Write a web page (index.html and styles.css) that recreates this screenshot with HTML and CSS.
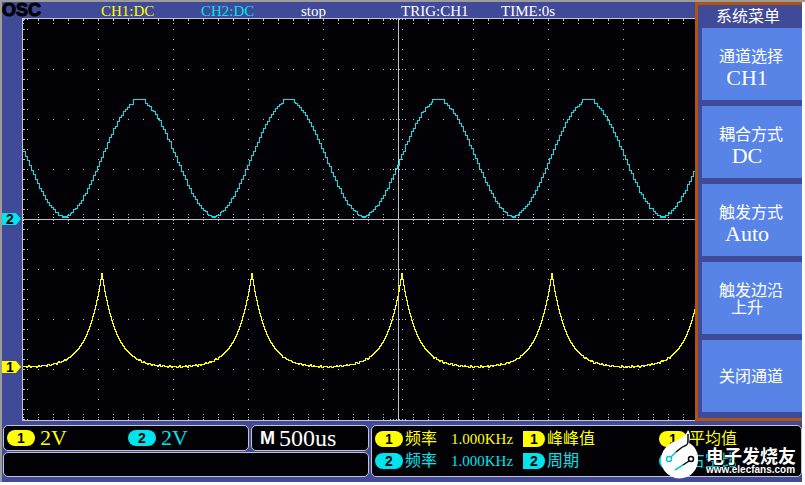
FILE: index.html
```html
<!DOCTYPE html>
<html lang="zh-CN">
<head>
    <meta charset="UTF-8">
    <meta name="viewport" content="width=device-width, initial-scale=1.0">
    <title>OSC</title>
    <link rel="stylesheet" href="styles.css">
</head>
<body>
    <div class="screen">
        <main class="top">
            <section class="scope">
                <header class="status">
                    <h1 class="logo">OSC</h1>
                    <span class="ch1">CH1:DC</span>
                    <span class="ch2">CH2:DC</span>
                    <span>stop</span>
                    <span>TRIG:CH1</span>
                    <span>TIME:0s</span>
                </header>
                <div class="plot-row">
                    <div class="rail">
                        <div class="marker marker-2">2</div>
                        <div class="marker marker-1">1</div>
                    </div>
                    <svg class="plot" id="plot">
                        <path id="grid" class="grid"></path>
                        <path id="wave1" class="wave wave-1"></path>
                        <path id="wave2" class="wave wave-2"></path>
                    </svg>
                </div>
            </section>

            <nav class="menu">
                <h2 class="menu-title">系统菜单</h2>
                <button class="item" type="button">
                    <span class="label">通道选择</span>
                    <span class="value">CH1</span>
                </button>
                <button class="item" type="button">
                    <span class="label">耦合方式</span>
                    <span class="value">DC</span>
                </button>
                <button class="item" type="button">
                    <span class="label">触发方式</span>
                    <span class="value">Auto</span>
                </button>
                <button class="item" type="button">
                    <span class="label">触发边沿</span>
                    <span class="value value-small">上升</span>
                </button>
                <button class="item item-single" type="button">
                    <span class="label">关闭通道</span>
                </button>
            </nav>
        </main>

        <footer class="readouts">
            <div class="settings">
                <div class="settings-row">
                    <div class="box scales">
                        <div class="scale ch1"><span class="pill">1</span>2V</div>
                        <div class="scale ch2"><span class="pill">2</span>2V</div>
                    </div>
                    <div class="box timebase"><b>M</b><span>500us</span></div>
                </div>
                <div class="box message"></div>
            </div>
            <div class="box measures">
                <div class="measure ch1"><span class="pill">1</span>频率<span class="number">1.000KHz</span></div>
                <div class="measure ch1"><span class="pill pill-half">1</span>峰峰值</div>
                <div class="measure ch1"><span class="pill">1</span>平均值</div>
                <div class="measure ch2"><span class="pill">2</span>频率<span class="number">1.000KHz</span></div>
                <div class="measure ch2"><span class="pill pill-half">2</span>周期</div>
                <div class="measure ch2"><span class="pill">2</span>占空比</div>
                <div class="brand">
                    <svg class="brand-mark" width="40" height="49" viewBox="0 0 40 49">
                        <path fill="#fff" d="M28 0C31 4 30 9 29 13C35 16 38 22 38 29A18.500 18.500 0 1 1 10 14C15 10 25 9 28 0Z"/>
                        <path fill="none" stroke="#05070c" stroke-width="1.500" d="M16 22L21 18C24 15 28 17 28 11V4"/>
                        <path fill="none" stroke="#0cc5d2" stroke-width="1.500" d="M11 27L16 22M15 40L23 35"/>
                        <path fill="none" stroke="#05070c" stroke-width="1.500" d="M23 35L29 31"/>
                        <circle cx="9" cy="29" r="2.500" fill="#fff" stroke="#0cc5d2" stroke-width="1.500"/>
                        <circle cx="31" cy="29" r="2.500" fill="#fff" stroke="#05070c" stroke-width="1.500"/>
                    </svg>
                    <div class="brand-text">
                        <span class="brand-name">电子发烧友</span>
                        <span class="brand-url">www.elecfans.com</span>
                    </div>
                </div>
            </div>
        </footer>
    </div>

    <script src="scope.js"></script>
</body>
</html>
```

FILE: styles.css
```css
body {
    margin: 0;
    padding-right: 3px;
    background: linear-gradient(#9c9c9c, #9c9c9c) 0 0 / 100% 2px no-repeat #fff;
    font-family: "Liberation Serif", "Noto Sans CJK SC", serif;
    color: #fff;
}

h1, h2 {
    margin: 0;
    font-weight: normal;
}

.ch1 { color: #ffff00; }
.ch2 { color: #00e4ec; }

.screen {
    background-color: #404a98;
    background-clip: padding-box;
    border-left: 2px solid #9c9c9c;
    border-top: 2px solid #9c9c9c;
}

.top {
    display: flex;
}

.scope {
    flex: 1;
    min-width: 0;
}

/* status line */
.status {
    display: grid;
    grid-template-columns: 99px repeat(5, 100px);
    height: 16px;
    font-size: 15px;
    line-height: 19px;
    white-space: nowrap;
}

.logo {
    font: bold 18px/17px "Liberation Sans", sans-serif;
    color: #020206;
    -webkit-text-stroke: 1px #020206;
}

/* plot */
.plot-row {
    display: flex;
}

.rail {
    position: relative;
    width: 20px;
}

.marker {
    position: absolute;
    left: 0;
    width: 19px;
    height: 12px;
    box-sizing: border-box;
    padding-left: 4px;
    font: bold 14px/13px "Liberation Sans", sans-serif;
    color: #020206;
    clip-path: polygon(0 0, 14px 0, 100% 50%, 14px 100%, 0 100%);
}

.marker-2 {
    top: 195px;
    background: #00e4ec;
}

.marker-1 {
    top: 343px;
    background: #ffff00;
}

.plot {
    display: block;
    flex: 1;
    min-width: 0;
    height: 401px;
    background: #020206;
    border: 1px solid #c4c4cc;
    border-right: 0;
}

.grid {
    fill: #c4c4cc;
    shape-rendering: crispEdges;
}

.wave {
    fill: none;
    shape-rendering: crispEdges;
}

.wave-1 { stroke: #ffff00; }
.wave-2 { stroke: #00e4ec; }

/* menu */
.menu {
    display: flex;
    flex-direction: column;
    gap: 6px;
    width: 100px;
    padding: 0 0 6px 4px;
    border: 3px solid #b4540c;
    border-right: 0;
}

.menu-title {
    margin-bottom: -6px;
    padding-right: 8px;
    font-size: 16px;
    line-height: 24px;
    height: 23px;
    text-align: center;
}

.item {
    display: flex;
    flex-direction: column;
    align-items: center;
    height: 72px;
    padding: 20px 2px 0 0;
    border: 0;
    background: #5884e8;
    color: #fff;
    font-family: inherit;
}

.item-single {
    justify-content: center;
    padding-top: 2px;
}

.label {
    font-size: 16px;
    line-height: 18px;
}

.value {
    padding-right: 8px;
    font-size: 22px;
    line-height: 24px;
}

.value-small {
    font-size: 16px;
    line-height: 15px;
}

/* bottom readouts */
.readouts {
    display: flex;
    gap: 2px;
    padding: 4px 0 5px 1px;
}

.settings {
    display: flex;
    flex-direction: column;
    gap: 1px;
    width: 366px;
}

.settings-row {
    display: flex;
    gap: 2px;
}

.box {
    box-sizing: border-box;
    background: #020206;
    border: 1px solid #c4c4cc;
    border-radius: 5px;
}

.scales {
    display: grid;
    grid-template-columns: 121px 1fr;
    flex: 1;
    height: 26px;
    padding-left: 3px;
}

.scale {
    display: flex;
    align-items: center;
    gap: 5px;
    font-size: 22px;
    line-height: 24px;
}

.timebase {
    display: flex;
    align-items: center;
    gap: 4px;
    width: 118px;
    padding-left: 8px;
    font-size: 24px;
    line-height: 24px;
}

.timebase b {
    font: bold 18px/24px "Liberation Sans", sans-serif;
}

.message {
    height: 25px;
}

.pill {
    width: 28px;
    height: 16px;
    border-radius: 8px;
    background: currentColor;
    font: bold 14px/16px "Liberation Sans", sans-serif;
    text-align: center;
}

.pill::first-letter {
    color: #020206;
}

.pill-half {
    width: 22px;
    border-radius: 0 8px 8px 0;
}

.measures {
    position: relative;
    flex: 1;
    display: grid;
    grid-template-columns: 148px 136px 1fr;
    grid-auto-rows: 22px;
    padding: 2px 0 0 3px;
}

.measure {
    display: flex;
    align-items: center;
    gap: 2px;
    font-size: 16px;
    line-height: 22px;
    white-space: nowrap;
}

.number {
    margin-left: 12px;
    font-size: 15px;
}

.brand {
    position: absolute;
    right: 5px;
    bottom: -3px;
    display: flex;
    align-items: flex-end;
    gap: 6px;
}

.brand-text {
    display: flex;
    flex-direction: column;
    padding-bottom: 4px;
    font-weight: bold;
    text-shadow: 0 0 2px #020206, 1px 1px 1px #020206;
}

.brand-name {
    font: bold 18px/19px "Noto Sans CJK SC", sans-serif;
}

.brand-url {
    font: bold 10px/10px "Liberation Sans", sans-serif;
}
```

FILE: scope.js
```js
const plot = document.getElementById('plot');
const width = plot.clientWidth;
const height = 401;
const centerX = 375;
const centerY = 200;

function dot(x, y) {
    return `M${x} ${y}h1v1h-1z`;
}

// Graticule: 75 x 50 px divisions, a dot every 15 px across and 10 px down
function drawGrid() {
    let d = `M0 ${centerY}h${width}v1h-${width}zM${centerX} 0h1v${height}h-1z`;

    for (let x = 0; x < width; x += 15) {
        for (let y = 50; y < height; y += 50) {
            d += dot(x, y);
        }
        for (const y of [0, 1, 4, 195, 198, 201, 204, 395, 398, 400]) {
            d += dot(x, y);
        }
    }

    for (let y = 0; y < height; y += 10) {
        for (let x = 75; x < width; x += 75) {
            d += dot(x, y);
        }
        for (const x of [0, 1, 4, 370, 379]) {
            d += dot(x, y);
        }
        if (y % 50 === 0) {
            d += dot(367, y) + dot(373, y) + dot(376, y) + dot(382, y);
        }
    }
    document.getElementById('grid').setAttribute('d', d);
}

// One sample per pixel, joined by vertical steps
function drawWave(id, sample) {
    let d = '';
    for (let x = 0; x < width; x++) {
        const y = Math.round(sample(x)) + 0.5;
        d += (x === 0 ? `M0 ${y}` : `V${y}`) + 'h1';
    }
    document.getElementById(id).setAttribute('d', d);
}

function noise(x) {
    return Math.sin(x * 12.9) * Math.sin(x * 4.7);
}

// CH1: sharp peaks that decay to the base line
drawWave('wave1', (x) => {
    const phase = (x - 78 + 1500) % 150;
    const distance = Math.min(phase, 150 - phase);
    const y = 348 - 94 * Math.exp(-distance / 14.5);
    return distance > 30 ? y + noise(x) : y;
});

// CH2: sine, sampled coarsely so the trace climbs in small steps
drawWave('wave2', (x) => {
    const s = Math.cos(2 * Math.PI * (x - 115.5) / 149.6);
    if (s > 0.97) {
        return 80;
    }
    if (s < -0.97) {
        return s < -0.995 ? 197 + (x % 2) : 196;
    }
    const held = x - (x % 2);
    return 138.5 - 57 * Math.cos(2 * Math.PI * (held - 115) / 149.6) + noise(held);
});

drawGrid();
```
